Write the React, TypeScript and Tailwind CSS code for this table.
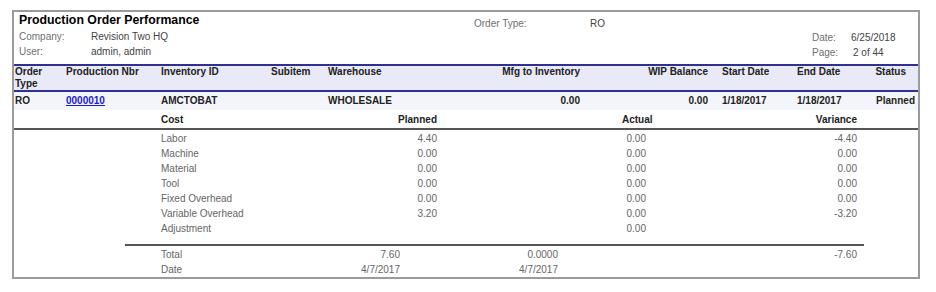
import { ReactNode } from "react";

type Line = { label: string; planned?: string; actual?: string; variance?: string };

const costLines: Line[] = [
  { label: "Labor", planned: "4.40", actual: "0.00", variance: "-4.40" },
  { label: "Machine", planned: "0.00", actual: "0.00", variance: "0.00" },
  { label: "Material", planned: "0.00", actual: "0.00", variance: "0.00" },
  { label: "Tool", planned: "0.00", actual: "0.00", variance: "0.00" },
  { label: "Fixed Overhead", planned: "0.00", actual: "0.00", variance: "0.00" },
  { label: "Variable Overhead", planned: "3.20", actual: "0.00", variance: "-3.20" },
  { label: "Adjustment", actual: "0.00" },
];

const Cell = ({ w, right, children, className = "" }: { w: string; right?: boolean; children?: ReactNode; className?: string }) => (
  <div className={`${w} shrink-0 whitespace-nowrap ${right ? "text-right" : ""} ${className}`}>{children}</div>
);

export default function App() {
  return (
    <div className="w-[936px] h-[292px] bg-white pt-[10px] pl-[12px] font-['Liberation_Sans',Arial,sans-serif] text-[10px]">
      <div className="w-[908px] h-[269px] border-2 border-[#9b9b9b] flex flex-col">
        {/* report heading */}
        <div className="flex h-[53px]">
          <div className="w-[460px] pl-[5px]">
            <div className="text-[12.3px] leading-[17px] font-bold text-black">Production Order Performance</div>
            <div className="flex leading-[15px]">
              <div className="w-[72px] text-[#707070]">Company:</div>
              <div className="text-[#444]">Revision Two HQ</div>
            </div>
            <div className="flex leading-[15px]">
              <div className="w-[72px] text-[#707070]">User:</div>
              <div className="text-[#444]">admin, admin</div>
            </div>
          </div>
          <div className="w-[338px] pt-[4px] flex leading-[15px]">
            <div className="w-[116px] text-[#707070]">Order Type:</div>
            <div className="text-[#444]">RO</div>
          </div>
          <div className="pt-[18px] leading-[15px]">
            <div className="flex">
              <div className="w-[39px] text-[#707070]">Date:</div>
              <div className="text-[#444]">6/25/2018</div>
            </div>
            <div className="flex">
              <div className="w-[39px] text-[#707070]">Page:</div>
              <div className="text-[#444] pl-[2px]">2 of 44</div>
            </div>
          </div>
        </div>

        {/* column headers */}
        <div className="flex h-[29px] border-y-2 border-[#2e3192] bg-[#e9e9f7] font-bold text-[#222] leading-[12px]">
          <Cell w="w-[52px]" className="pl-[1px]">Order<br />Type</Cell>
          <Cell w="w-[95px]">Production Nbr</Cell>
          <Cell w="w-[110px]">Inventory ID</Cell>
          <Cell w="w-[57px]">Subitem</Cell>
          <Cell w="w-[132px]">Warehouse</Cell>
          <Cell w="w-[120px]" right>Mfg to Inventory</Cell>
          <Cell w="w-[128px]" right>WIP Balance</Cell>
          <Cell w="w-[89px]" className="pl-[14px]">Start Date</Cell>
          <Cell w="w-[60px]">End Date</Cell>
          <Cell w="w-[50px]" right className="pr-[1px]">Status</Cell>
        </div>

        {/* order row */}
        <div className="flex h-[18px] bg-[#f4f4fb] font-bold text-[#222] leading-[18px]">
          <Cell w="w-[52px]" className="pl-[1px]">RO</Cell>
          <Cell w="w-[95px]">
            <span className="text-[#1a1ad0] underline">0000010</span>
          </Cell>
          <Cell w="w-[110px]">AMCTOBAT</Cell>
          <Cell w="w-[57px]" />
          <Cell w="w-[132px]">WHOLESALE</Cell>
          <Cell w="w-[120px]" right>0.00</Cell>
          <Cell w="w-[128px]" right>0.00</Cell>
          <Cell w="w-[89px]" className="pl-[14px]">1/18/2017</Cell>
          <Cell w="w-[60px]">1/18/2017</Cell>
          <Cell w="w-[58px]" right>Planned</Cell>
        </div>

        {/* cost breakdown */}
        <div className="relative flex h-[20px] border-b-2 border-[#555] font-bold text-[#222] leading-[20px]">
          <Cell w="w-[147px]" />
          <Cell w="w-[110px]">Cost</Cell>
          <Cell w="w-[166px]" right>Planned</Cell>
          <Cell w="w-[185px]" />
          <Cell w="w-[235px]">Actual</Cell>
          <div className="absolute right-[61px] top-0">Variance</div>
        </div>
        <div className="flex flex-col pt-[1px] text-[#666] leading-[15px]">
          {costLines.map((l) => (
            <div key={l.label} className="flex h-[15px]">
              <Cell w="w-[147px]" />
              <Cell w="w-[110px]">{l.label}</Cell>
              <Cell w="w-[166px]" right>{l.planned}</Cell>
              <Cell w="w-[209px]" right>{l.actual}</Cell>
              <Cell w="w-[211px]" right>{l.variance}</Cell>
            </div>
          ))}
        </div>

        <div className="mt-[8px] ml-[111px] w-[739px] border-t-2 border-[#555]" />

        <div className="pt-[1px] text-[#666] leading-[15px]">
          <div className="flex h-[15px]">
            <Cell w="w-[147px]" />
            <Cell w="w-[110px]">Total</Cell>
            <Cell w="w-[129px]" right>7.60</Cell>
            <Cell w="w-[158px]" right>0.0000</Cell>
            <Cell w="w-[299px]" right>-7.60</Cell>
          </div>
          <div className="flex h-[15px]">
            <Cell w="w-[147px]" />
            <Cell w="w-[110px]">Date</Cell>
            <Cell w="w-[129px]" right>4/7/2017</Cell>
            <Cell w="w-[158px]" right>4/7/2017</Cell>
          </div>
        </div>
      </div>
    </div>
  );
}
